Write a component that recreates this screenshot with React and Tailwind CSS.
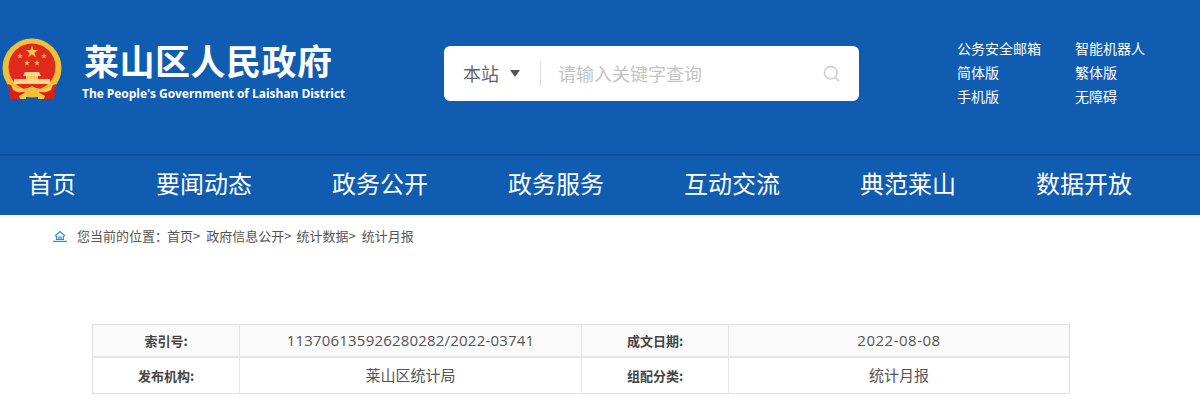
import React from "react";
import { Search } from "lucide-react";

const cjk = "font-['Microsoft_YaHei','Noto_Sans_CJK_SC',sans-serif]";

const navItems = ["首页", "要闻动态", "政务公开", "政务服务", "互动交流", "典范莱山", "数据开放"];
const topLinks = ["公务安全邮箱", "智能机器人", "简体版", "繁体版", "手机版", "无障碍"];

// five point star as polygon points
const starPoints = (cx, cy, r) => {
    const pts = [];
    for (let i = 0; i < 10; i++) {
        const rad = i % 2 === 0 ? r : r * 0.4;
        const a = -Math.PI / 2 + (i * Math.PI) / 5;
        pts.push(`${(cx + rad * Math.cos(a)).toFixed(2)},${(cy + rad * Math.sin(a)).toFixed(2)}`);
    }
    return pts.join(" ");
};

// emblem is a picture in the reference, so it gets drawn by hand
const Emblem = () => (
    <svg width="62" height="66" viewBox="0 0 62 66" className="shrink-0">
        <circle cx="31" cy="31" r="29.5" fill="#f2c038" />
        <circle cx="31" cy="30" r="23.5" fill="#e2291f" />
        <polygon points={starPoints(31, 15, 6.5)} fill="#f7cb45" />
        <polygon points={starPoints(19, 19, 3)} fill="#f7cb45" />
        <polygon points={starPoints(43, 19, 3)} fill="#f7cb45" />
        <polygon points={starPoints(26, 26, 3)} fill="#f7cb45" />
        <polygon points={starPoints(36, 26, 3)} fill="#f7cb45" />
        <path d="M24 35 h14 l2 4 h-18 Z" fill="#f8d98a" />
        <path d="M25 39 h12 v3 h-12 Z" fill="#f3c76a" />
        <path d="M13 42 h36 v5 h-36 Z" fill="#f8d98a" />
        <path d="M7 47 L17 51 L24 55 L20 62 L9 62 Z" fill="#d8201c" />
        <path d="M55 47 L45 51 L38 55 L42 62 L53 62 Z" fill="#d8201c" />
        <path d="M10 47 C18 53 25 53 31 49 C37 53 44 53 52 47 L50 53 C44 57 38 55 31 53 C24 55 18 57 12 53 Z" fill="#f5c94a" />
        <rect x="24" y="52" width="14" height="8" rx="3" fill="#f2c038" />
        <path d="M18 59 L25 55 V62 H19 Z M44 59 L37 55 V62 H43 Z" fill="#f5c94a" />
    </svg>
);

const HomeIcon = () => (
    <svg width="14" height="12" viewBox="0 0 14 12" fill="none" stroke="#3a86cf" strokeWidth="1.2">
        <path d="M2 6 L7 1.5 L12 6" />
        <path d="M3.5 6 V9.5 H10.5 V6" />
        <path d="M5.8 9.5 V7 H8.2 V9.5" />
        <path d="M0 11.4 H14" />
    </svg>
);

const App = () => {
    return (
        <div className={`w-[1200px] h-[412px] overflow-hidden bg-white ${cjk}`}>
            {/* Header */}
            <div className="h-[156px] bg-[#105cb0] border-b-2 border-[#0c4f9c] flex items-start">
                <div className="ml-[1px] mt-[37px]"><Emblem /></div>
                <div className="ml-[19px] mt-[37px] w-[300px]">
                    <div className="ml-[2px] text-[35px] leading-[46px] font-bold text-white tracking-[0.5px] whitespace-nowrap">莱山区人民政府</div>
                    <div className="text-[12px] leading-[16px] font-bold text-white font-['Open_Sans',sans-serif] mt-[3px] tracking-[-0.05px] whitespace-nowrap">The People's Government of Laishan District</div>
                </div>
                <div className="ml-[62px] mt-[46px] w-[415px] h-[55px] bg-white rounded-[6px] flex items-center">
                    <span className="ml-[19px] text-[18px] text-[#666]">本站</span>
                    <span className="ml-[11px] w-0 h-0 border-x-[5px] border-x-transparent border-t-[7px] border-t-[#555]"></span>
                    <span className="ml-[20px] w-px h-[24px] bg-[#ddd]"></span>
                    <span className="ml-[17px] text-[18px] text-[#c4c4c4]">请输入关键字查询</span>
                    <Search className="ml-auto mr-[18px] w-[19px] h-[19px] text-[#cfcfcf]" strokeWidth={2} />
                </div>
                <div className="ml-[98px] mt-[36px] grid grid-cols-[118px_90px] text-[14px] leading-[24px] text-white">
                    {topLinks.map(item => <span key={item} className="whitespace-nowrap">{item}</span>)}
                </div>
            </div>

            {/* Nav */}
            <div className="h-[59px] bg-[#105cb0] flex items-center pl-[28px] pb-[6px]">
                {navItems.map((item, i) => (
                    <span key={item} className={`shrink-0 text-[24px] text-white ${i === 0 ? "w-[128px]" : "w-[176px]"}`}>{item}</span>
                ))}
            </div>

            {/* Breadcrumb */}
            <div className="h-[44px] flex items-center pl-[53px] text-[13px] text-[#555] pb-[2px]">
                <HomeIcon />
                <span className="ml-[10px] whitespace-nowrap">您当前的位置：</span>
                <span className="-ml-[1px]">首页&gt;</span>
                <span className="ml-[6px]">政府信息公开&gt;</span>
                <span className="ml-[5px]">统计数据&gt;</span>
                <span className="ml-[6px]">统计月报</span>
            </div>

            {/* Info table */}
            <div className="mx-[92px] mt-[65px] w-[978px] border border-[#e0e0e0] grid grid-cols-[147px_342px_147px_1fr] grid-rows-[33px_35px] text-[#555]">
                <div className="flex items-center justify-center bg-[#fafafa] border-r border-b-2 border-[#e6e6e6] text-[13px] font-bold text-[#444]">索引号:</div>
                <div className="flex items-center justify-center border-r border-b-2 border-[#e6e6e6] bg-[#fafafa] text-[15px] tracking-[0.2px] font-['Open_Sans',sans-serif]">113706135926280282/2022-03741</div>
                <div className="flex items-center justify-center bg-[#fafafa] border-r border-b-2 border-[#e6e6e6] text-[13px] font-bold text-[#444]">成文日期:</div>
                <div className="flex items-center justify-center border-b-2 border-[#e6e6e6] bg-[#fafafa] text-[15px] tracking-[0.5px] font-['Open_Sans',sans-serif]">2022-08-08</div>
                <div className="flex items-center justify-center border-r border-[#e6e6e6] text-[13px] font-bold text-[#444]">发布机构:</div>
                <div className="flex items-center justify-center border-r border-[#e6e6e6] text-[15px]">莱山区统计局</div>
                <div className="flex items-center justify-center border-r border-[#e6e6e6] text-[13px] font-bold text-[#444]">组配分类:</div>
                <div className="flex items-center justify-center text-[15px]">统计月报</div>
            </div>
        </div>
    );
};

export default App;
